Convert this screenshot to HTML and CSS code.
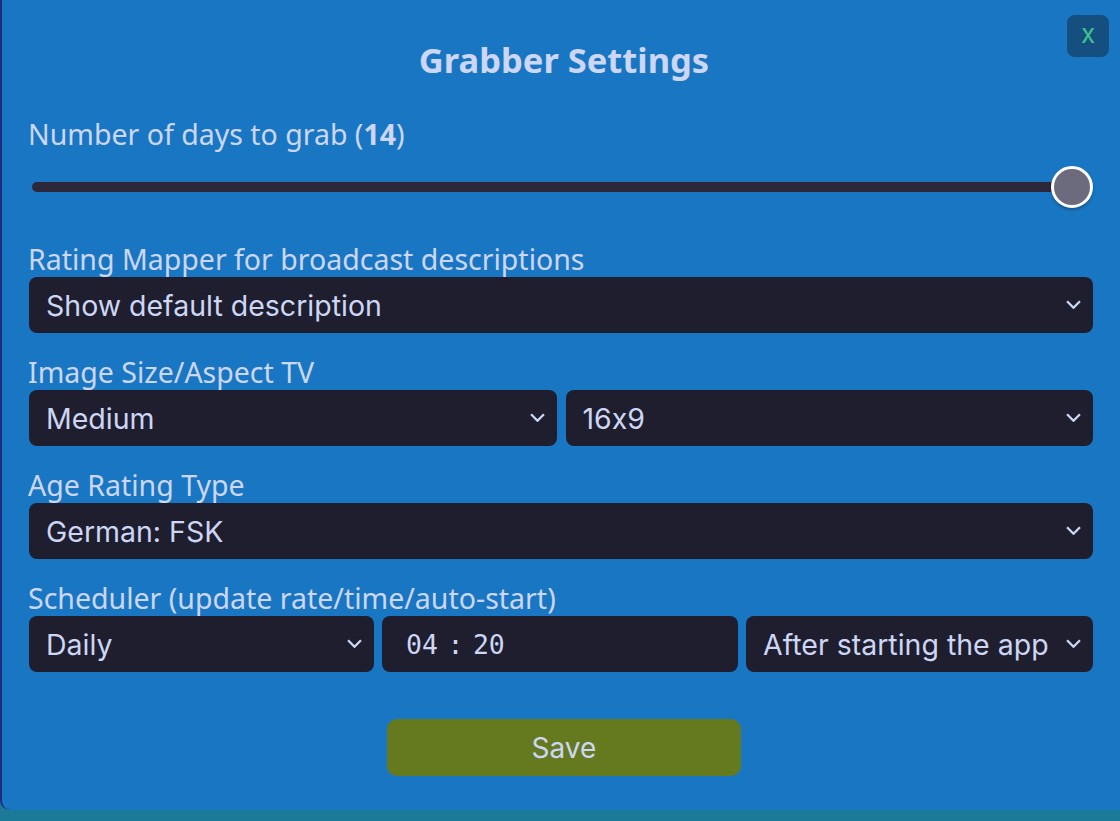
FILE: index.html
```html
<!DOCTYPE html>
<html lang="en">
<head>
    <meta charset="UTF-8">
    <meta name="viewport" content="width=device-width, initial-scale=1.0">
    <title>Grabber Settings</title>
    <link rel="stylesheet" href="styles.css">
</head>
<body>
    <div class="dialog">
        <button class="close-btn">x</button>
        <h1>Grabber Settings</h1>

        <div class="group first">
            <label class="label">Number of days to grab (<b>14</b>)</label>
            <div class="slider-wrap">
                <input type="range" class="slider" min="1" max="14" value="14">
            </div>
        </div>

        <div class="group">
            <label class="label">Rating Mapper for broadcast descriptions</label>
            <div class="row">
                <div class="select-box">
                    <select><option>Show default description</option></select>
                    <svg class="chevron" viewBox="0 0 14 8"><path d="M1 1l6 6 6-6"/></svg>
                </div>
            </div>
        </div>

        <div class="group">
            <label class="label">Image Size/Aspect TV</label>
            <div class="row">
                <div class="select-box">
                    <select><option>Medium</option></select>
                    <svg class="chevron" viewBox="0 0 14 8"><path d="M1 1l6 6 6-6"/></svg>
                </div>
                <div class="select-box">
                    <select><option>16x9</option></select>
                    <svg class="chevron" viewBox="0 0 14 8"><path d="M1 1l6 6 6-6"/></svg>
                </div>
            </div>
        </div>

        <div class="group">
            <label class="label">Age Rating Type</label>
            <div class="row">
                <div class="select-box">
                    <select><option>German: FSK</option></select>
                    <svg class="chevron" viewBox="0 0 14 8"><path d="M1 1l6 6 6-6"/></svg>
                </div>
            </div>
        </div>

        <div class="group">
            <label class="label">Scheduler (update rate/time/auto-start)</label>
            <div class="row thirds">
                <div class="select-box">
                    <select><option>Daily</option></select>
                    <svg class="chevron" viewBox="0 0 14 8"><path d="M1 1l6 6 6-6"/></svg>
                </div>
                <div class="time-box"><span>04</span><span class="sep">:</span><span>20</span></div>
                <div class="select-box">
                    <select><option>After starting the app</option></select>
                    <svg class="chevron" viewBox="0 0 14 8"><path d="M1 1l6 6 6-6"/></svg>
                </div>
            </div>
        </div>

        <div class="actions">
            <button class="save-btn">Save</button>
        </div>
    </div>
</body>
</html>
```

FILE: styles.css
```css
body {
    margin: 0;
    padding: 0;
    background: #1a7a98;
    font-family: 'Noto Sans', sans-serif;
    color: #cdd6f4;
}

.dialog {
    position: relative;
    box-sizing: border-box;
    height: 810px;
    padding: 39px 27px 0 27px;
    background: #1976c2;
    border-left: 2px solid #1c2d7e;
    border-bottom-left-radius: 10px;
    box-shadow: 0 3px 5px rgba(26, 120, 150, 0.8);
}

h1 {
    margin: 0 0 37px 0;
    text-align: center;
    font-size: 34.5px;
    font-weight: 700;
    line-height: 41px;
    color: #cdd6f4;
    padding-left: 6px;
}

.close-btn {
    position: absolute;
    top: 15px;
    right: 11px;
    width: 42px;
    height: 42px;
    border: none;
    border-radius: 8px;
    background: #154f7f;
    color: #3ec48c;
    font-family: 'Inter', sans-serif;
    font-size: 26px;
    line-height: 1;
    padding: 0 0 4px 0;
}

.group {
    margin-bottom: 22px;
}

.group.first {
    margin-bottom: 20px;
}

.label {
    display: block;
    font-size: 28.5px;
    line-height: 35px;
    color: #cdd6f4;
    margin-left: -1px;
}

.label b {
    font-weight: 700;
}

.slider-wrap {
    height: 70px;
    display: flex;
    align-items: center;
}

.slider {
    -webkit-appearance: none;
    appearance: none;
    width: 100%;
    margin: 0;
    height: 42px;
    background: transparent;
}

.slider::-webkit-slider-runnable-track {
    height: 10px;
    margin-left: 3px;
    border-radius: 5px;
    background: #2c2839;
}

.slider::-webkit-slider-thumb {
    -webkit-appearance: none;
    appearance: none;
    box-sizing: border-box;
    width: 42px;
    height: 42px;
    margin-top: -16px;
    border-radius: 50%;
    background: #6c6b7d;
    border: 3px solid #ffffff;
    box-shadow: 0 2px 3px rgba(0, 0, 0, 0.25);
}

.row {
    display: flex;
    gap: 9px;
}

.row.thirds {
    display: grid;
    grid-template-columns: 345fr 356fr 347fr;
    gap: 8px;
}

.select-box {
    position: relative;
    flex: 1 1 0;
    min-width: 0;
}

.select-box select {
    -webkit-appearance: none;
    appearance: none;
    width: 100%;
    height: 56px;
    box-sizing: border-box;
    padding: 0 40px 0 17px;
    border: none;
    border-radius: 8px;
    background: #1e1e2e;
    color: #cdd6f4;
    font-family: 'Inter', sans-serif;
    font-size: 28.5px;
    font-feature-settings: "calt" 0;
}

.chevron {
    position: absolute;
    right: 12px;
    top: 23px;
    width: 15px;
    height: 9px;
    fill: none;
    stroke: #cdd6f4;
    stroke-width: 2.2;
    pointer-events: none;
}

.time-box {
    height: 56px;
    box-sizing: border-box;
    padding: 0 24px;
    border-radius: 8px;
    background: #1e1e2e;
    color: #cdd6f4;
    font-family: 'DejaVu Sans Mono', monospace;
    font-size: 26.5px;
    line-height: 58px;
}

.time-box .sep {
    margin: 0 9.5px;
}

.actions {
    display: flex;
    justify-content: center;
    padding-top: 25px;
    padding-left: 6px;
}

.save-btn {
    width: 354px;
    height: 57px;
    border: none;
    border-radius: 10px;
    background: #657a1f;
    color: #cdd6f4;
    font-family: 'Inter', sans-serif;
    font-size: 28px;
}
```
